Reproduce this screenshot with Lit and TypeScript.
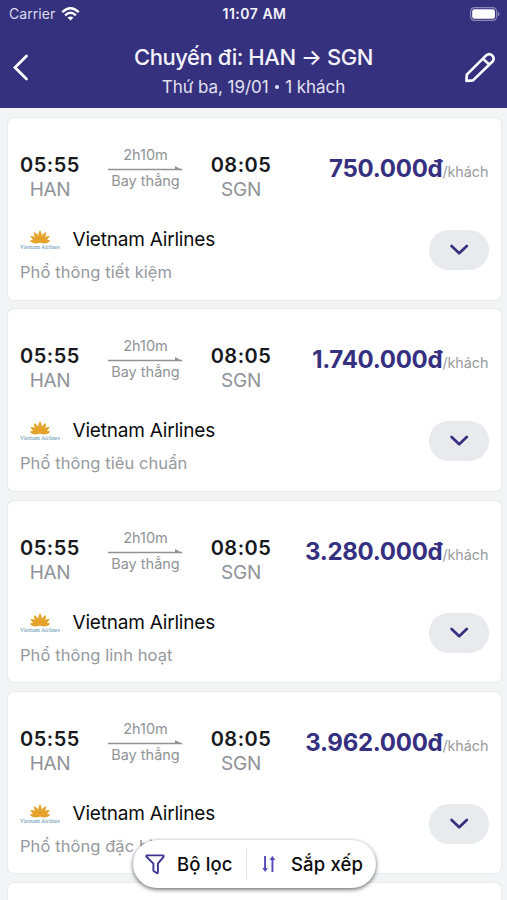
import { LitElement, html, svg, css, nothing } from "lit";
import { customElement, property } from "lit/decorators.js";

interface Fare {
  price: string;
  cabin: string;
}

const FARES: Fare[] = [
  { price: "750.000đ", cabin: "Phổ thông tiết kiệm" },
  { price: "1.740.000đ", cabin: "Phổ thông tiêu chuẩn" },
  { price: "3.280.000đ", cabin: "Phổ thông linh hoạt" },
  { price: "3.962.000đ", cabin: "Phổ thông đặc biệt" },
];

// One lotus petal, rotated about the base of the flower
const petal = (angle: number, length: number) => svg`
  <path transform="rotate(${angle} 20 13.5)"
    d="M20 13.5 C17 ${13.5 - length * 0.45} 18.2 ${13.5 - length * 0.75} 20 ${13.5 - length}
       C21.8 ${13.5 - length * 0.75} 23 ${13.5 - length * 0.45} 20 13.5Z"/>`;

@customElement("fare-card")
export class FareCard extends LitElement {
  @property({ attribute: false }) fare?: Fare;

  static styles = css`
    :host {
      display: block;
      box-sizing: border-box;
      height: 181.4px;
      background: #fff;
      border-radius: 6px;
      box-shadow: 0 0 0 1px #e8eaec;
      padding: 28px 12px 0 12.5px;
      white-space: nowrap;
    }
    .route {
      display: flex;
      align-items: flex-start;
      height: 80px;
    }
    .stop {
      width: 60px;
      padding-top: 7px;
      display: flex;
      flex-direction: column;
      align-items: center;
      line-height: 24px;
    }
    .time {
      font-size: 20px;
      font-weight: 600;
      color: #18191c;
      letter-spacing: 0.5px;
    }
    .code {
      font-size: 19px;
      line-height: 25px;
      color: #8f9297;
      letter-spacing: -0.3px;
    }
    .leg {
      width: 75px;
      margin: 0 28px;
      display: flex;
      flex-direction: column;
      align-items: center;
      color: #909398;
      font-size: 14.5px;
      line-height: 18px;
    }
    .arrow {
      display: block;
      margin: 2px 0 0;
    }
    .price {
      margin-left: auto;
      padding-top: 11px;
      line-height: 24px;
      display: flex;
      align-items: baseline;
    }
    .amount {
      font-size: 24px;
      font-weight: 700;
      color: #35307f;
      letter-spacing: -0.28px;
    }
    .per {
      font-size: 14.4px;
      color: #999ba0;
      letter-spacing: -0.05px;
    }
    .details {
      display: flex;
      justify-content: space-between;
      align-items: flex-start;
    }
    .airline {
      display: flex;
      align-items: center;
      height: 28px;
      gap: 12.5px;
    }
    .name {
      font-size: 19px;
      letter-spacing: -0.2px;
      margin-top: -1px;
      color: #0c0c0e;
    }
    .cabin {
      margin-top: 5px;
      font-size: 16.5px;
      letter-spacing: 0.08px;
      line-height: 26px;
      color: #96999e;
    }
    .toggle {
      width: 60px;
      height: 40px;
      margin-top: 4px;
      border: 0;
      padding: 0;
      border-radius: 20px;
      background: #e9eaed;
      display: grid;
      place-items: center;
    }
  `;

  render() {
    if (!this.fare) return nothing;
    return html`
      <div class="route">
        <div class="stop"><span class="time">05:55</span><span class="code">HAN</span></div>
        <div class="leg">
          <span class="duration">2h10m</span>
          <svg class="arrow" width="75" height="6" viewBox="0 0 75 6">
            <path d="M0 2.8H74V4.3H0Z M67 0L75 4.3H67Z" fill="#909296" />
          </svg>
          <span class="direct">Bay thẳng</span>
        </div>
        <div class="stop"><span class="time">08:05</span><span class="code">SGN</span></div>
        <div class="price"><span class="amount">${this.fare.price}</span><span class="per">/khách</span></div>
      </div>
      <div class="details">
        <div>
          <div class="airline">
            <svg width="40" height="22" viewBox="0 0 40 22">
              <g fill="#e5a32c">
                ${petal(0, 12.5)} ${petal(-30, 12)} ${petal(30, 12)}
                ${petal(-56, 11.5)} ${petal(56, 11.5)} ${petal(-80, 10.5)} ${petal(80, 10.5)}
              </g>
              <text x="0" y="19.5" textLength="40" lengthAdjust="spacingAndGlyphs"
                font-family="Liberation Serif, serif" font-size="5.6" fill="#5b8fb0">Vietnam Airlines</text>
            </svg>
            <span class="name">Vietnam Airlines</span>
          </div>
          <div class="cabin">${this.fare.cabin}</div>
        </div>
        <button class="toggle" aria-label="Chi tiết">
          <svg width="20" height="12" viewBox="0 0 20 12" fill="none" stroke="#35307f"
            stroke-width="2.7" stroke-linecap="round" stroke-linejoin="round">
            <path d="M2.6 2L10.2 9.3L17.8 2" />
          </svg>
        </button>
      </div>
    `;
  }
}

@customElement("app-root")
export class AppRoot extends LitElement {
  static styles = css`
    :host {
      display: flex;
      flex-direction: column;
      position: relative;
      height: 900px;
      overflow: hidden;
      background: #f2f4f5;
      font-family: Inter, "Liberation Sans", sans-serif;
      white-space: nowrap;
    }
    header {
      flex: none;
      height: 108px;
      background: #36317f;
      color: #f4f3fb;
    }
    .status {
      display: grid;
      grid-template-columns: 1fr auto 1fr;
      align-items: center;
      height: 27px;
      padding: 0 7px 0 9px;
      font-size: 14px;
    }
    .carrier {
      display: flex;
      align-items: center;
      gap: 5.5px;
      color: #dddcec;
      letter-spacing: 0.05px;
    }
    .clock {
      font-weight: 600;
      font-size: 14px;
      letter-spacing: 0.5px;
    }
    .battery {
      justify-self: end;
    }
    .nav {
      display: grid;
      grid-template-columns: 60px 1fr 60px;
      align-items: center;
      height: 81px;
    }
    .back {
      padding-left: 12px;
      margin-top: -2px;
    }
    .edit {
      justify-self: end;
      padding-right: 11px;
    }
    .heading {
      display: flex;
      flex-direction: column;
      align-items: center;
      padding-top: 6px;
    }
    .title {
      font-size: 22px;
      line-height: 30px;
      font-weight: 500;
      letter-spacing: -0.45px;
    }
    .subtitle {
      font-size: 17px;
      line-height: 24px;
      margin-top: 3px;
      letter-spacing: -0.05px;
      color: #e3e2f1;
    }
    .dot {
      display: inline-block;
      width: 4px;
      height: 4px;
      border-radius: 50%;
      background: currentColor;
      margin: 0 6.3px;
      vertical-align: 4px;
    }
    .list {
      display: flex;
      flex-direction: column;
      gap: 9.9px;
      padding: 10.2px 6.5px 0 7.5px;
    }
    fare-card {
      flex: none;
    }
    .tools {
      position: absolute;
      left: 133px;
      top: 840px;
      width: 243px;
      height: 48px;
      border-radius: 24px;
      background: #fff;
      box-shadow: 0 1.5px 4px rgba(0, 0, 0, 0.6);
      display: flex;
      align-items: center;
      font-size: 18.5px;
      font-weight: 500;
      color: #0b0b0d;
    }
    .filter,
    .sort {
      display: flex;
      align-items: center;
      letter-spacing: 0.15px;
    }
    .filter {
      width: 113px;
      padding-left: 12px;
      box-sizing: border-box;
      gap: 12px;
    }
    .divider {
      width: 1px;
      height: 30px;
      background: #dfe1e4;
    }
    .sort {
      padding-left: 15px;
      gap: 15px;
    }
  `;

  render() {
    return html`
      <header>
        <div class="status">
          <div class="carrier">
            <span class="net">Carrier</span>
            <svg width="19" height="14" viewBox="0 0 19 14" fill="none" stroke="#fff" stroke-width="2.3">
              <path d="M1.2 5.2Q9.5 -2.6 17.8 5.2" />
              <path d="M4.1 8.4Q9.5 3.2 14.9 8.4" />
              <path d="M9.5 13.5L6.5 10.6Q9.5 8.2 12.5 10.6Z" fill="#fff" stroke="none" />
            </svg>
          </div>
          <span class="clock">11:07 AM</span>
          <svg class="battery" width="31" height="14" viewBox="0 0 31 14">
            <rect x="1.6" y="0.6" width="26" height="12.8" rx="3.8" fill="none" stroke="#8b88b6" stroke-width="1.2" />
            <rect x="3.2" y="2.2" width="22.8" height="9.6" rx="2.2" fill="#fff" />
            <path d="M28.8 4.6Q30.6 5.4 30.6 7T28.8 9.4Z" fill="#8b88b6" />
          </svg>
        </div>
        <div class="nav">
          <svg class="back" width="18" height="28" viewBox="0 0 18 28" fill="none" stroke="#fff"
            stroke-width="2.8" stroke-linecap="round">
            <path d="M14.5 3L3 14.5L14.5 26" />
          </svg>
          <div class="heading">
            <span class="title">Chuyến đi: HAN → SGN</span>
            <span class="subtitle">Thứ ba, 19/01<span class="dot"></span>1 khách</span>
          </div>
          <svg class="edit" width="32" height="32" viewBox="0 0 32 32" fill="none" stroke="#fff"
            stroke-width="2.6" stroke-linejoin="round">
            <path d="M2.4 29L2.8 22.6L22.4 3.2Q25.2 0.8 28 3.3T28.8 9.3L9 28.4Z" />
            <path d="M18.8 6.6L25.6 12.8" />
          </svg>
        </div>
      </header>
      <main class="list">
        ${FARES.map((fare) => html`<fare-card .fare=${fare}></fare-card>`)}
        <fare-card></fare-card>
      </main>
      <div class="tools">
        <div class="filter">
          <svg width="20" height="21" viewBox="0 0 20 21" fill="none" stroke="#3b3490"
            stroke-width="1.9" stroke-linejoin="round">
            <path d="M2 1.4H18Q19 1.6 18.5 2.8L12.9 9.6V18.4Q12.7 19.6 11.6 19L8.4 16.8V9.6L1.5 2.8Q1 1.6 2 1.4Z" />
          </svg>
          <span class="filter-label">Bộ lọc</span>
        </div>
        <span class="divider"></span>
        <div class="sort">
          <svg width="14" height="18" viewBox="0 0 14 18" fill="#554bb8">
            <path d="M2.1 1H4V13H5.8L3.1 17L0.4 13H2.1Z" />
            <path d="M9.5 17H11.4V5H13.4L10.4 1L7.4 5H9.5Z" />
          </svg>
          <span class="sort-label">Sắp xếp</span>
        </div>
      </div>
    `;
  }
}
